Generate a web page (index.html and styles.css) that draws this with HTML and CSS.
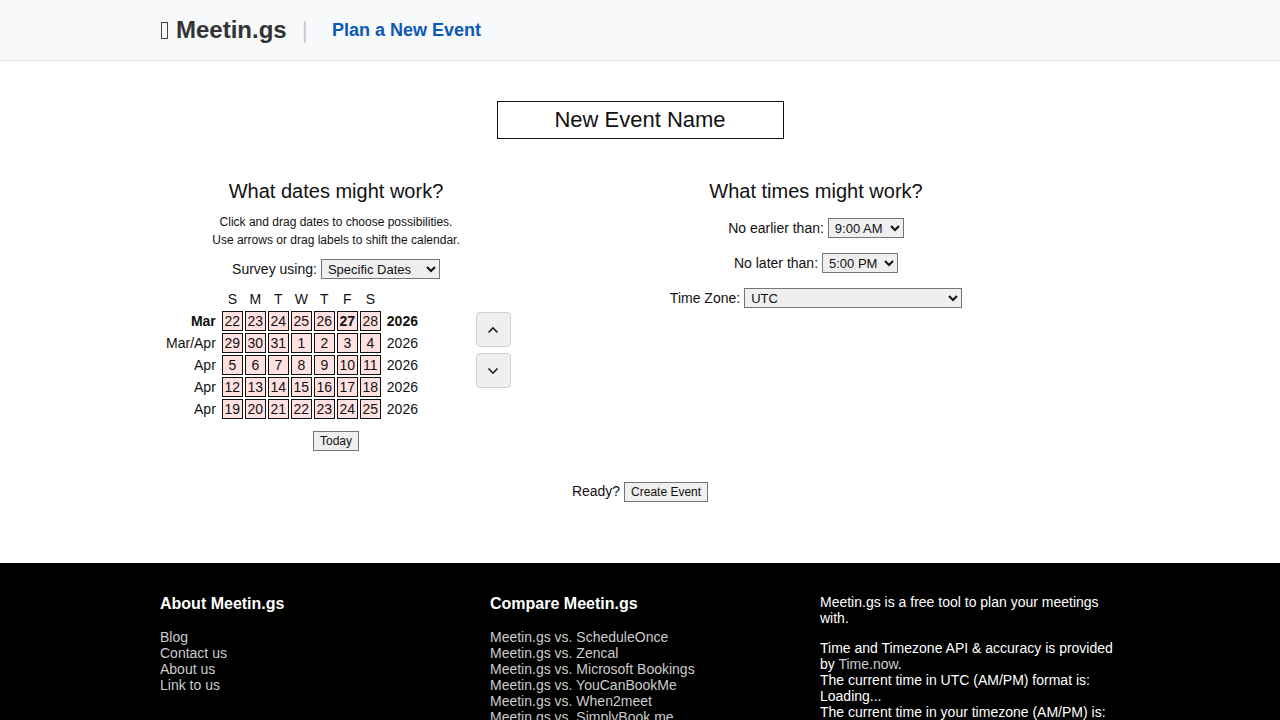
FILE: index.html
```html
<!DOCTYPE html>
<html lang="en">
<head>
    <meta charset="UTF-8">
    <meta name="viewport" content="width=device-width, initial-scale=1.0">
    <title>Meetin.gs - Plan a New Event</title>
    <link rel="stylesheet" href="styles.css">
</head>
<body>
    <!-- top bar -->
    <div class="topbar">
        <div class="wrap topbar-inner">
            <span class="brand"><span class="brand-icon"></span> Meetin.gs</span>
            <span class="sep">|</span>
            <a class="nav-link" href="#">Plan a New Event</a>
        </div>
    </div>

    <div class="wrap main">
        <div class="name-row">
            <input type="text" class="event-name" value="New Event Name">
        </div>

        <div class="columns">
            <!-- dates -->
            <div class="col-dates">
                <h3>What dates might work?</h3>
                <p class="hint">Click and drag dates to choose possibilities.<br>Use arrows or drag labels to shift the calendar.</p>
                <div class="field">
                    <label>Survey using:</label>
                    <select class="sel sel-survey">
                        <option>Specific Dates</option>
                        <option>Days of the Week</option>
                    </select>
                </div>

                <div class="cal-row">
                    <table class="cal">
                        <thead>
                            <tr>
                                <th></th>
                                <th>S</th><th>M</th><th>T</th><th>W</th><th>T</th><th>F</th><th>S</th>
                                <th></th>
                            </tr>
                        </thead>
                        <tbody id="calBody"></tbody>
                    </table>
                    <div class="shift">
                        <button class="shift-btn">
                            <svg width="14" height="14" viewBox="0 0 14 14"><polyline points="2.5,9.5 7,5 11.5,9.5" fill="none" stroke="#222" stroke-width="1.6"/></svg>
                        </button>
                        <button class="shift-btn">
                            <svg width="14" height="14" viewBox="0 0 14 14"><polyline points="2.5,4.5 7,9 11.5,4.5" fill="none" stroke="#222" stroke-width="1.6"/></svg>
                        </button>
                    </div>
                </div>
                <button class="btn btn-today">Today</button>
            </div>

            <!-- times -->
            <div class="col-times">
                <h3>What times might work?</h3>
                <div class="field field-time">
                    <label>No earlier than:</label>
                    <select class="sel sel-time">
                        <option>9:00 AM</option>
                        <option>10:00 AM</option>
                    </select>
                </div>
                <div class="field field-time">
                    <label>No later than:</label>
                    <select class="sel sel-time">
                        <option>5:00 PM</option>
                        <option>6:00 PM</option>
                    </select>
                </div>
                <div class="field field-time">
                    <label>Time Zone:</label>
                    <select class="sel sel-zone">
                        <option>UTC</option>
                    </select>
                </div>
            </div>
        </div>

        <div class="ready">
            Ready? <button class="btn">Create Event</button>
        </div>
    </div>

    <!-- footer -->
    <div class="footer">
        <div class="wrap footer-cols">
            <div>
                <h4>About Meetin.gs</h4>
                <a href="#">Blog</a>
                <a href="#">Contact us</a>
                <a href="#">About us</a>
                <a href="#">Link to us</a>
            </div>
            <div>
                <h4>Compare Meetin.gs</h4>
                <a href="#">Meetin.gs vs. ScheduleOnce</a>
                <a href="#">Meetin.gs vs. Zencal</a>
                <a href="#">Meetin.gs vs. Microsoft Bookings</a>
                <a href="#">Meetin.gs vs. YouCanBookMe</a>
                <a href="#">Meetin.gs vs. When2meet</a>
                <a href="#">Meetin.gs vs. SimplyBook.me</a>
                <a href="#">Meetin.gs vs. Doodle</a>
            </div>
            <div class="footer-text">
                <p>Meetin.gs is a free tool to plan your meetings with.</p>
                <p>Time and Timezone API &amp; accuracy is provided by <a href="#">Time.now</a>.<br>
                The current time in UTC (AM/PM) format is:<br>
                Loading...<br>
                The current time in your timezone (AM/PM) is:<br>
                Loading...</p>
            </div>
        </div>
    </div>

    <script>
        // five weeks starting Sunday 22 Mar 2026
        const months = ["Jan", "Feb", "Mar", "Apr", "May", "Jun", "Jul", "Aug", "Sep", "Oct", "Nov", "Dec"];
        const today = { m: 2, d: 27 };
        const body = document.getElementById("calBody");
        let html = "";
        for (let w = 0; w < 5; w++) {
            const days = [];
            for (let i = 0; i < 7; i++) {
                days.push(new Date(2026, 2, 22 + w * 7 + i));
            }
            const m1 = days[0].getMonth(), m2 = days[6].getMonth();
            const label = m1 === m2 ? months[m1] : months[m1] + "/" + months[m2];
            html += `<tr><td class="mon${w === 0 ? " cur" : ""}">${label}</td>`;
            html += days.map(d => {
                const isToday = d.getMonth() === today.m && d.getDate() === today.d;
                return `<td class="day${isToday ? " today" : ""}">${d.getDate()}</td>`;
            }).join("");
            html += `<td class="yr${w === 0 ? " cur" : ""}">${days[6].getFullYear()}</td></tr>`;
        }
        body.innerHTML = html;
    </script>
</body>
</html>
```

FILE: styles.css
```css
body { margin: 0; font-family: "Liberation Sans", Arial, sans-serif; font-size: 14px; color: #111; background: #fff; }
.wrap { width: 960px; margin: 0 auto; }

/* top bar */
.topbar { background: #f8f9fa; border-bottom: 1px solid #dfe3e8; height: 60px; }
.topbar-inner { display: flex; align-items: center; height: 60px; }
.brand { font-size: 24px; font-weight: bold; color: #333; display: flex; align-items: center; gap: 8px; }
.brand-icon { display: inline-block; width: 5px; height: 15px; border: 1px solid #444; margin-left: 1px; }
.sep { font-size: 24px; color: #ccc; margin: 0 14px 0 15px; }
.nav-link { font-size: 18px; font-weight: bold; color: #0a58b8; text-decoration: none; margin-left: 10px; }

/* event name */
.main { padding-top: 40px; }
.name-row { text-align: center; }
.event-name { width: 287px; height: 38px; box-sizing: border-box; border: 1px solid #111; font-family: inherit; font-size: 22px; text-align: center; color: #111; padding: 0; margin: 0; }

.columns { display: flex; margin-top: 41px; }
.col-dates { width: 352px; text-align: center; }
.col-times { flex: 1; text-align: center; }
h3 { font-size: 20px; font-weight: normal; margin: 0; line-height: 23px; }
.hint { font-size: 12px; line-height: 18px; margin: 10px 0 0; }

.field { margin-top: 10px; display: flex; justify-content: center; align-items: center; gap: 4px; height: 20px; }
.field-time { margin-top: 15px; }
.sel { font-family: inherit; font-size: 13px; height: 20px; background: #efefef; border: 1px solid #767676; border-radius: 0; padding: 0 2px; color: #111; }
.sel-survey { width: 119px; }
.sel-time { width: 76px; }
.sel-zone { width: 218px; }

/* calendar */
.cal-row { display: flex; justify-content: center; align-items: flex-start; gap: 56px; margin-top: 8px; padding-left: 3px; }
.cal { border-collapse: separate; border-spacing: 2px; }
.cal th { font-weight: normal; height: 20px; padding: 0; font-size: 14px; }
.cal td { padding: 0; height: 18px; line-height: 18px; font-size: 14px; }
.cal .day { width: 19px; border: 1px solid #111; background: #ffe1e1; text-align: center; }
.cal .today { font-weight: bold; }
.cal .mon { text-align: right; padding-right: 4px; }
.cal .yr { text-align: left; padding-left: 4px; }
.cal .cur { font-weight: bold; }
.shift { display: flex; flex-direction: column; gap: 6px; margin-top: 25px; }
.shift-btn { width: 35px; height: 35px; background: #efefef; border: 1px solid #d0d0d0; border-radius: 4px; padding: 0; display: flex; align-items: center; justify-content: center; }

.btn { font-family: inherit; font-size: 12px; padding: 2px 6px; background: #efefef; border: 1px solid #767676; border-radius: 0; color: #111; }
.btn-today { margin-top: 10px; }

.ready { text-align: center; margin-top: 31px; padding-bottom: 61px; }

/* footer */
.footer { background: #000; color: #fff; padding: 32px 0 40px; }
.footer-cols { display: grid; grid-template-columns: 300px 300px 300px; column-gap: 30px; }
.footer h4 { font-size: 16px; margin: 0 0 16px; line-height: 18px; }
.footer a { display: block; color: #ccc; text-decoration: none; line-height: 16px; }
.footer-text { margin-top: -1px; }
.footer-text p { margin: 0 0 14px; line-height: 16px; }
.footer-text a { display: inline; }
```
